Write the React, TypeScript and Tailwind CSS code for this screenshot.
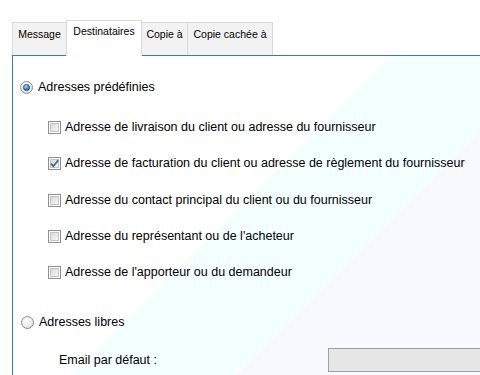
const TABS = [
  { label: "Message", w: "w-[55px]", active: false },
  { label: "Destinataires", w: "w-[76px]", active: true },
  { label: "Copie à", w: "w-[47px]", active: false },
  { label: "Copie cachée à", w: "w-[86px]", active: false },
];

// mt keeps each row on the reference's 36-37px rhythm
const CHOICES = [
  { label: "Adresse de livraison du client ou adresse du fournisseur", checked: false, mt: "mt-0" },
  { label: "Adresse de facturation du client ou adresse de règlement du fournisseur", checked: true, mt: "mt-[20px]" },
  { label: "Adresse du contact principal du client ou du fournisseur", checked: false, mt: "mt-[21px]" },
  { label: "Adresse du représentant ou de l'acheteur", checked: false, mt: "mt-[20px]" },
  { label: "Adresse de l'apporteur ou du demandeur", checked: false, mt: "mt-[20px]" },
];

function Radio({ checked, id }: { checked: boolean; id: string }) {
  return (
    <svg width="13" height="13" viewBox="0 0 13 13" className="shrink-0">
      <defs>
        <radialGradient id={`ring-${id}`} cx="0.4" cy="0.35" r="0.75">
          <stop offset="0" stopColor="#ffffff" />
          <stop offset="0.6" stopColor="#ececec" />
          <stop offset="1" stopColor="#cfcfcf" />
        </radialGradient>
        <radialGradient id={`dot-${id}`} cx="0.4" cy="0.35" r="0.7">
          <stop offset="0" stopColor="#a8dcff" />
          <stop offset="0.55" stopColor="#3b8fd6" />
          <stop offset="1" stopColor="#1a4f86" />
        </radialGradient>
      </defs>
      <circle cx="6.5" cy="6.5" r="6" fill={`url(#ring-${id})`} stroke="#8c8c8c" />
      {checked && <circle cx="6.5" cy="6.5" r="3.1" fill={`url(#dot-${id})`} stroke="#2b4a6e" strokeWidth="0.8" />}
    </svg>
  );
}

function Check({ checked, id }: { checked: boolean; id: string }) {
  return (
    <svg width="13" height="13" viewBox="0 0 13 13" className="shrink-0">
      <defs>
        <linearGradient id={`cb-${id}`} x1="0" y1="0" x2="1" y2="1">
          <stop offset="0" stopColor="#d6d6d6" />
          <stop offset="1" stopColor="#fafafa" />
        </linearGradient>
      </defs>
      <rect x="0.5" y="0.5" width="12" height="12" fill="#fff" stroke="#8e8f8f" />
      <rect x="2.5" y="2.5" width="8" height="8" fill={`url(#cb-${id})`} stroke="#c4c4c4" />
      {checked && (
        <path d="M3 6.6 L5.4 9.2 L10.2 3.2" fill="none" stroke="#4a5f97" strokeWidth="1.8" />
      )}
    </svg>
  );
}

export default function App() {
  return (
    <div className="w-[480px] h-[375px] overflow-hidden bg-white flex flex-col text-black font-['Liberation_Sans',Arial,sans-serif]">
      {/* tab strip */}
      <div className="relative z-10 flex items-end h-[55px] pl-[12px] shrink-0">
        {TABS.map((t, i) =>
          t.active ? (
            <div
              key={t.label}
              className={`${t.w} -ml-px -mb-px h-[36px] bg-white border border-b-0 border-[#d9d9d9] pt-[4px] text-center text-[10.5px] leading-[12px]`}
            >
              {t.label}
            </div>
          ) : (
            <div
              key={t.label}
              className={`${t.w} ${i > 0 ? "-ml-px" : ""} h-[33px] bg-[#f2f2f2] border border-b-0 border-[#d9d9d9] pt-[5px] text-center text-[10.5px] leading-[12px]`}
            >
              {t.label}
            </div>
          )
        )}
      </div>

      {/* panel */}
      <div className="flex-1 ml-[12px] border-t border-l border-[#3b79b0] bg-[linear-gradient(135deg,#ffffff_267px,#f4ffff_267px,#f4ffff_384px,#f8f8ff_384px)] text-[12.5px] leading-[16px]">
        <div className="mt-[23px] pl-[7px] flex items-center gap-[5px] h-[16px]">
          <Radio checked id="r1" />
          <span>Adresses prédéfinies</span>
        </div>

        <div className="mt-[24px] pl-[35px] flex flex-col">
          {CHOICES.map((c, i) => (
            <div key={i} className={`${c.mt} flex items-center gap-[4px] h-[16px]`}>
              <Check checked={c.checked} id={`c${i}`} />
              <span className="whitespace-nowrap">{c.label}</span>
            </div>
          ))}
        </div>

        <div className="mt-[34px] pl-[8px] flex items-center gap-[5px] h-[16px]">
          <Radio checked={false} id="r2" />
          <span>Adresses libres</span>
        </div>

        <div className="mt-[18px] pl-[46px] flex items-center h-[24px]">
          <span className="w-[269px] shrink-0">Email par défaut :</span>
          <div className="w-[200px] h-[24px] shrink-0 bg-[#e6e6e6] border border-[#a0a0a0]" />
        </div>
      </div>
    </div>
  );
}
